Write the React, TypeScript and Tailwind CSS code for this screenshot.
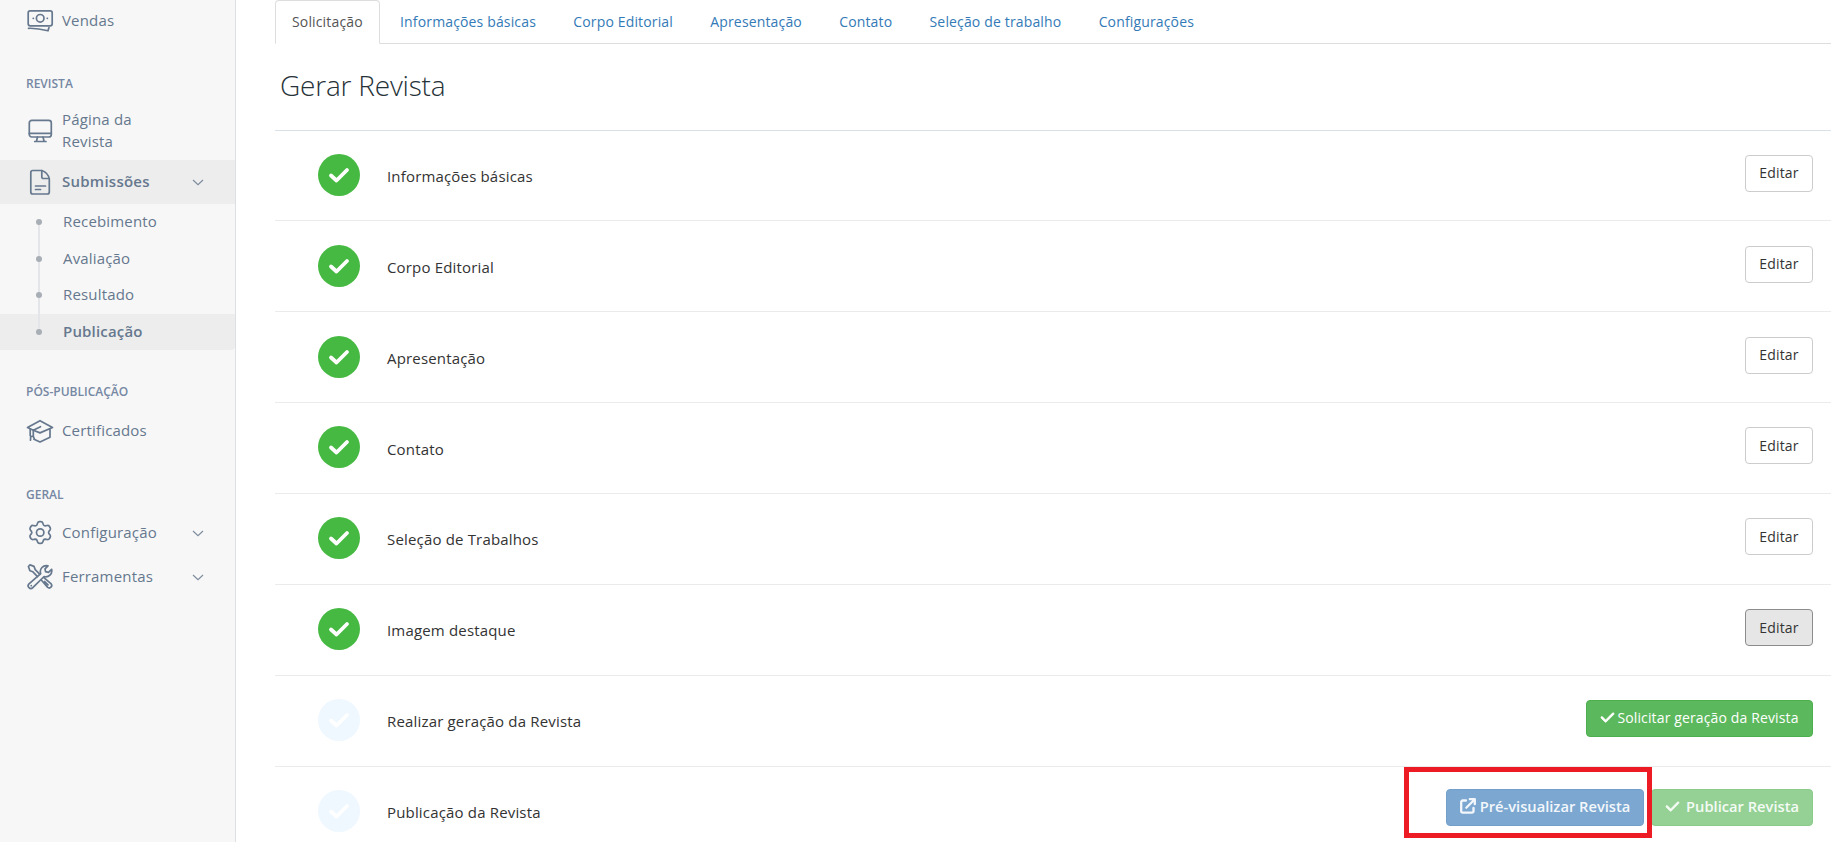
import React from 'react';
import clsx from 'clsx';
import { FaCheck } from 'react-icons/fa6';

const tabs = [
  'Solicitação',
  'Informações básicas',
  'Corpo Editorial',
  'Apresentação',
  'Contato',
  'Seleção de trabalho',
  'Configurações',
];

interface Step {
  label: string;
  done: boolean;
  action: 'edit' | 'edit-active' | 'request' | 'publish';
}

const steps: Step[] = [
  { label: 'Informações básicas', done: true, action: 'edit' },
  { label: 'Corpo Editorial', done: true, action: 'edit' },
  { label: 'Apresentação', done: true, action: 'edit' },
  { label: 'Contato', done: true, action: 'edit' },
  { label: 'Seleção de Trabalhos', done: true, action: 'edit' },
  { label: 'Imagem destaque', done: true, action: 'edit-active' },
  { label: 'Realizar geração da Revista', done: false, action: 'request' },
  { label: 'Publicação da Revista', done: false, action: 'publish' },
];

const Icon: React.FC<{ children: React.ReactNode }> = ({ children }) => (
  <svg
    viewBox="0 0 28 28"
    className="h-7 w-7 shrink-0"
    fill="none"
    stroke="#66788e"
    strokeWidth="1.7"
    strokeLinecap="round"
    strokeLinejoin="round"
  >
    {children}
  </svg>
);

const CashIcon = () => (
  <Icon>
    <rect x="2.2" y="3.8" width="24" height="15" rx="2" />
    <circle cx="14.2" cy="11.3" r="3.8" />
    <path d="M7.2 11.3h.2M21.2 11.3h.2" />
    <path d="M2.5 21.3c6-.2 13 .8 19.500 2.500l1-3.200" />
  </Icon>
);

const MonitorIcon = () => (
  <Icon>
    <rect x="3.3" y="3.3" width="22" height="16.7" rx="2.5" />
    <path d="M3.3 16.3h22M11.5 20l-1 4M17 20l1 4M8.700 24.500h11.300" />
  </Icon>
);

const FileIcon = () => (
  <Icon>
    <path d="M6.800 2.500h9c4 1.500 6.800 4.500 7.500 8.500v13a2 2 0 0 1-2 2H6.800a2 2 0 0 1-2-2V4.500a2 2 0 0 1 2-2Z" />
    <path d="M15.800 2.700V9a1.500 1.500 0 0 0 1.500 1.500h5.700M9.500 18h10M9.500 21.500h5" />
  </Icon>
);

const GraduationIcon = () => (
  <Icon>
    <path d="M14 3.700 1.500 10.500l5.800 2.700L14.500 9.700M14 3.700l12.500 6.800L14 15.900l-6.700-2.700M24 12.500v7.800L14 25l-6-2.700" />
    <path d="M4.200 12v6.500M7.300 13.200v6l-2.600.3-.2 3.700M7.300 19.200l1 2.500" />
  </Icon>
);

const GearIcon = () => (
  <Icon>
    <circle cx="14.2" cy="13.5" r="3.7" />
    <path d="M11.500 4.200Q12 2.600 13.500 2.600h1.400q1.500 0 2 1.600l.6 1.700q.5 1 1.700 1l2-.4q1.500-.2 2.300 1l.7 1.200q.7 1.300-.3 2.500l-1 1.200q-.7.900 0 2.200l1 1.200q1 1.200.3 2.500l-.7 1.200q-.8 1.200-2.300 1l-2-.4q-1.200 0-1.700 1l-.6 1.700q-.5 1.600-2 1.600h-1.400q-1.500 0-2-1.600l-.6-1.700q-.5-1-1.700-1l-2 .4q-1.500.2-2.300-1l-.7-1.200q-.7-1.300.3-2.500l1-1.200q.7-1.300 0-2.200l-1-1.200q-1-1.200-.3-2.500l.7-1.200q.8-1.200 2.300-1l2 .4q1.200 0 1.700-1Z" />
  </Icon>
);

const ToolsIcon = () => (
  <Icon>
    <path d="M4 1.900 2.400 3.500l1.500 4.300 3 1 4.600 4.800M4 1.900l4 1.500 1.200 3.200 4.700 4.700" />
    <path d="m15.500 17.300 6.200 7.100a2.500 2.500 0 0 0 3.500-3.500l-7.300-6.200M18.700 18.500l3.300 3.400" />
    <path d="M25.600 6.300 22.500 9.400l-2.900-.7-.6-2.800 3-3.100a6 6 0 0 0-7.300 7.800L3 20.900a2.500 2.500 0 0 0 3.800 3.800L18.100 13.500a6 6 0 0 0 7.500-7.200ZM5.200 22.700h.1" />
  </Icon>
);

const ExternalIcon = () => (
  <svg viewBox="0 0 16 16" className="mr-1 size-4 shrink-0" fill="none" stroke="currentColor" strokeWidth="2.300" strokeLinecap="round" strokeLinejoin="round">
    <path d="M6 2.500H2.700A1.500 1.500 0 0 0 1.200 4v9.200a1.500 1.500 0 0 0 1.500 1.500H12a1.500 1.500 0 0 0 1.500-1.500V10" />
    <path d="M9.800 1.200h5v5M14.300 1.700 6.300 9.700" />
  </svg>
);

const Chevron = () => (
  <svg viewBox="0 0 12 7" className="mt-px ml-auto h-[7px] w-3" fill="none" stroke="#7b8a9c" strokeWidth="1.100">
    <path d="M1 1l5 4.700L11 1" />
  </svg>
);

interface NavItemProps {
  icon: React.ReactNode;
  label: string;
  expandable?: boolean;
  active?: boolean;
  className?: string;
}

const NavItem: React.FC<NavItemProps> = ({ icon, label, expandable, active, className }) => (
  <div
    className={clsx(
      'flex items-center pr-[31px] pl-[26px] text-[15px] leading-[22px]',
      active ? 'bg-[#ededed] font-semibold tracking-[0.250px]' : 'tracking-[0.170px]',
      className
    )}
  >
    {icon}
    <span className="ml-2 max-w-[100px] pb-0.5">{label}</span>
    {expandable && <Chevron />}
  </div>
);

const SectionTitle: React.FC<{ children: React.ReactNode; className: string }> = ({ children, className }) => (
  <h6 className={clsx('pl-[26px] text-[12px] leading-[18px] font-semibold text-[#7587a3] uppercase', className)}>
    {children}
  </h6>
);

const SubMenu = () => {
  const items = ['Recebimento', 'Avaliação', 'Resultado', 'Publicação'];
  return (
    <ul>
      {items.map((item, index) => (
        <li
          key={item}
          className={clsx(
            'relative flex items-center pl-9 text-[15px] tracking-[0.170px]',
            index === 3 ? 'h-9 rounded-br bg-[#ededed] font-semibold' : 'h-[36.600px]'
          )}
        >
          {index > 0 && <span className="absolute bottom-1/2 left-[38px] h-[37px] w-0.5 bg-[#e4e5e9]" />}
          <span className="relative z-10 size-1.5 rounded-full bg-[#a8aeb5]" />
          <span className="ml-[21px] pb-0.5">{item}</span>
        </li>
      ))}
    </ul>
  );
};

const Sidebar = () => (
  <aside className="h-full w-[236px] shrink-0 border-r border-[#d9e0e6] bg-[#f7f7f7] text-[#66788e]">
    <NavItem icon={<CashIcon />} label="Vendas" className="h-[42px]" />
    <SectionTitle className="mt-[33px]">Revista</SectionTitle>
    <NavItem icon={<MonitorIcon />} label="Página da Revista" className="mt-[15px] h-[52px] pb-[7px]" />
    <NavItem icon={<FileIcon />} label="Submissões" expandable active className="h-11" />
    <SubMenu />
    <SectionTitle className="mt-[33px]">Pós-publicação</SectionTitle>
    <NavItem icon={<GraduationIcon />} label="Certificados" className="mt-2 h-11" />
    <SectionTitle className="mt-[33px]">Geral</SectionTitle>
    <NavItem icon={<GearIcon />} label="Configuração" expandable className="mt-[7px] h-11" />
    <NavItem icon={<ToolsIcon />} label="Ferramentas" expandable className="h-11" />
  </aside>
);

const btn = 'flex h-[37px] items-center justify-center rounded border whitespace-nowrap';

const StepActions: React.FC<{ action: Step['action'] }> = ({ action }) => {
  if (action === 'request') {
    return (
      <button className={clsx(btn, 'w-[227px] border-[#4cae4c] bg-[#5cb85c] pb-px text-[14px] tracking-[0.130px] text-white')}>
        <FaCheck className="mr-0.5 size-[15px] stroke-white stroke-[24px]" />
        Solicitar geração da Revista
      </button>
    );
  }

  if (action === 'publish') {
    return (
      <div className="relative flex gap-[7px] text-[14.700px] font-semibold">
        <button className={clsx(btn, 'w-[198px] border-[#73a0ca] bg-[#7ba7d1] pb-0.5 text-[#f3f7fb]')}>
          <ExternalIcon />
          Pré-visualizar Revista
        </button>
        <button className={clsx(btn, 'w-[162px] border-[#8aca8a] bg-[#95d195] pb-0.5 text-[#f4fbf4]')}>
          <FaCheck className="mr-[6px] size-[15px] stroke-[#f4fbf4] stroke-[24px]" />
          Publicar Revista
        </button>
        {/* highlight around the preview button */}
        <div className="absolute top-[-22px] left-[-42px] h-[71px] w-[248px] border-5 border-[#ed1c24]" />
      </div>
    );
  }

  return (
    <button
      className={clsx(
        btn,
        'w-[68px] pb-px text-[14px] tracking-[0.150px] text-[#333]',
        action === 'edit-active' ? 'border-[#8c8c8c] bg-[#e6e6e6]' : 'border-[#ccc] bg-white'
      )}
    >
      Editar
    </button>
  );
};

const StepRow: React.FC<{ step: Step; first: boolean }> = ({ step, first }) => (
  <div
    className={clsx(
      'flex h-[90.850px] items-start border-t pr-[18px] pl-[43px]',
      first ? 'border-[#d9e0e6]' : 'border-[#ebebeb]'
    )}
  >
    <div
      className={clsx(
        'mt-[23.250px] flex size-[42px] items-center justify-center rounded-full',
        step.done ? 'bg-[#46b942]' : 'bg-[#eff7ff]'
      )}
    >
      <svg viewBox="0 0 42 42" className="size-full" fill="none" stroke="#fff" strokeWidth="3.800" strokeLinecap="round" strokeLinejoin="round">
        <path d="m13 21.500 5.500 5L29 16" />
      </svg>
    </div>
    <span className="mt-[34.400px] ml-[27px] text-[15px] leading-[22px] tracking-[0.170px] text-[#333]">{step.label}</span>
    <div className={clsx('ml-auto', step.action === 'publish' ? 'mt-[22.250px]' : 'mt-[24.250px]')}>
      <StepActions action={step.action} />
    </div>
  </div>
);

export default function App() {
  return (
    <div className="flex h-[842px] w-full overflow-hidden bg-white font-['Open_Sans',sans-serif]">
      <Sidebar />
      <main className="min-w-0 flex-1 pl-[39px]">
        <nav className="flex h-11 border-b border-[#ddd] text-[14px] tracking-[0.150px]">
          {tabs.map((tab, index) => (
            <a
              key={tab}
              className={clsx(
                'mr-[3.300px] flex h-11 items-center rounded-t border px-4 pb-0.5',
                index === 0 ? 'border-[#ddd] border-b-white bg-white text-[#555]' : 'border-transparent text-[#337ab7]'
              )}
            >
              {tab}
            </a>
          ))}
        </nav>
        <h1 className="mt-[23px] mb-[26.600px] pl-[5px] text-[28px] leading-9 font-light tracking-[-0.200px] text-[#263238]">
          Gerar Revista
        </h1>
        {steps.map((step, index) => (
          <StepRow key={step.label} step={step} first={index === 0} />
        ))}
      </main>
    </div>
  );
}
